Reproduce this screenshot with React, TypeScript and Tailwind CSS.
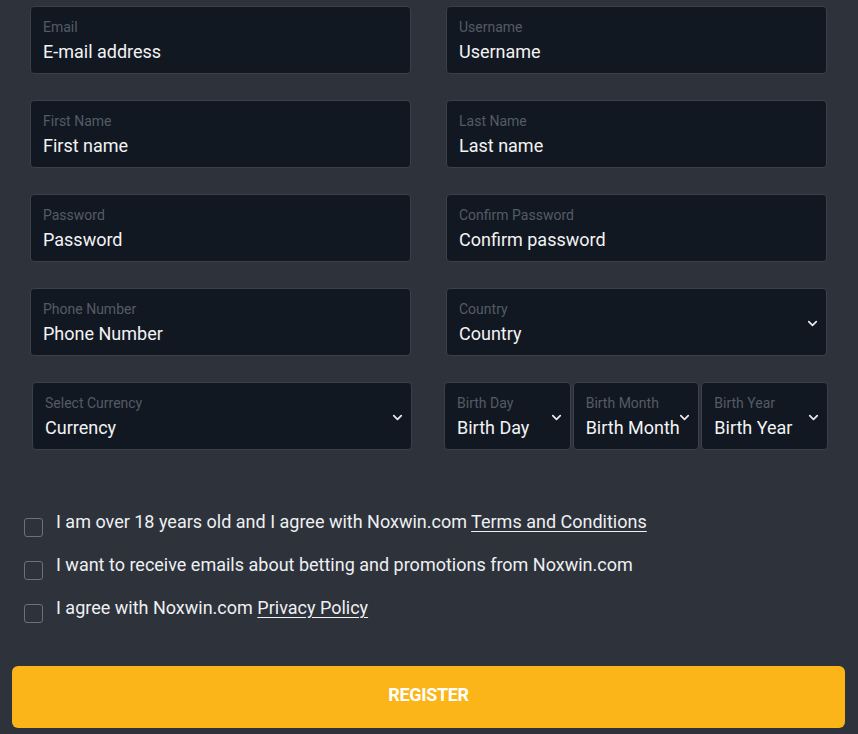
import { ChevronDown } from "lucide-react";

const font = { fontFamily: "Roboto, 'Liberation Sans', sans-serif" };

function Field({ label, value, select }: { label: string; value: string; select?: boolean }) {
  return (
    <div className="relative h-[68px] bg-[#121821] border border-[#3b414b] rounded-[4px] px-[12px] pt-[11px]">
      <div className="text-[14px] leading-[18px] text-[#545b65] whitespace-nowrap">{label}</div>
      <div className="text-[18px] leading-[26px] mt-[3px] text-[#f2f3f5] whitespace-nowrap overflow-hidden">{value}</div>
      {select && (
        <ChevronDown
          className="absolute right-[6px] top-[27px] text-[#e8e9eb]"
          size={15}
          strokeWidth={2.8}
        />
      )}
    </div>
  );
}

function Check({ children }: { children: React.ReactNode }) {
  return (
    <div className="flex items-start gap-[13px] h-[43px]">
      <div className="w-[19px] h-[19px] mt-[7px] rounded-[3px] border border-[#6b717a] shrink-0" />
      <div className="text-[18px] leading-[22px] text-[#eef0f2] whitespace-nowrap">{children}</div>
    </div>
  );
}

export default function App() {
  return (
    <div className="min-h-[734px] w-[858px] bg-[#2d323b] pt-[6px]" style={font}>
      <div className="grid grid-cols-2 gap-x-[35px] gap-y-[26px] pl-[30px] pr-[31px]">
        <Field label="Email" value="E-mail address" />
        <Field label="Username" value="Username" />
        <Field label="First Name" value="First name" />
        <Field label="Last Name" value="Last name" />
        <Field label="Password" value="Password" />
        <Field label="Confirm Password" value="Confirm password" />
        <Field label="Phone Number" value="Phone Number" />
        <Field label="Country" value="Country" select />
        <div className="ml-[2px] -mr-[1px]">
          <Field label="Select Currency" value="Currency" select />
        </div>
        <div className="grid grid-cols-3 gap-[2px] -ml-[2px] -mr-[1px]">
          <Field label="Birth Day" value="Birth Day" select />
          <Field label="Birth Month" value="Birth Month" select />
          <Field label="Birth Year" value="Birth Year" select />
        </div>
      </div>

      <div className="mt-[61px] pl-[24px] flex flex-col">
        <Check>
          I am over 18 years old and I agree with Noxwin.com{" "}
          <span className="underline underline-offset-[3px]">Terms and Conditions</span>
        </Check>
        <Check>I want to receive emails about betting and promotions from Noxwin.com</Check>
        <Check>
          I agree with Noxwin.com <span className="underline underline-offset-[3px]">Privacy Policy</span>
        </Check>
      </div>

      <div className="pl-[12px] pr-[13px] mt-[26px]">
        <button className="w-full h-[62px] rounded-[6px] bg-[#fbb518] text-white font-bold text-[18px] tracking-[-0.3px] pb-[6px]">
          REGISTER
        </button>
      </div>
    </div>
  );
}
